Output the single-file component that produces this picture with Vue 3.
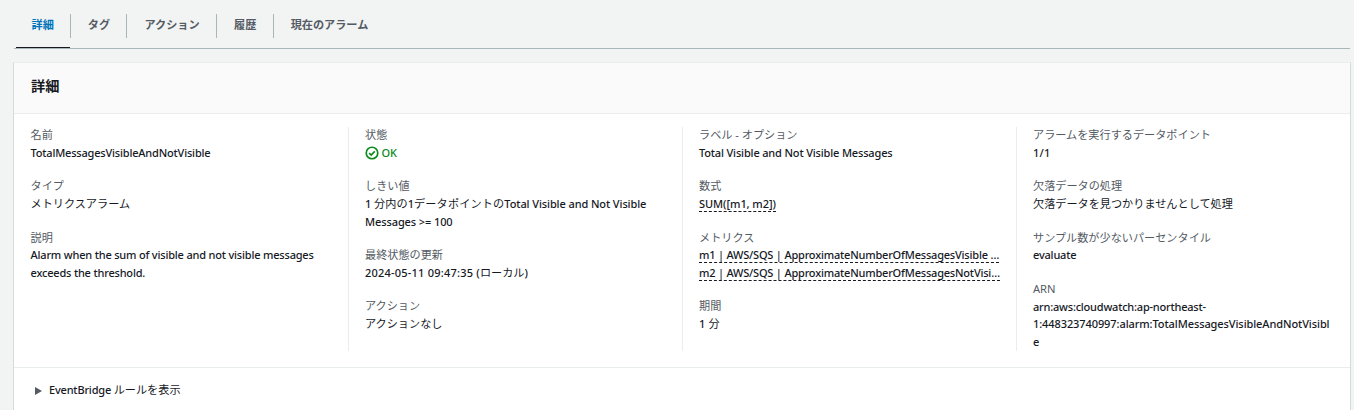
<script setup>
const tabs = ['詳細', 'タグ', 'アクション', '履歴', '現在のアラーム']

const columns = [
  [
    { label: '名前', lines: ['TotalMessagesVisibleAndNotVisible'] },
    { label: 'タイプ', lines: ['メトリクスアラーム'] },
    { label: '説明', lines: ['Alarm when the sum of visible and not visible messages', 'exceeds the threshold.'] },
  ],
  [
    { label: '状態', lines: ['OK'], kind: 'ok' },
    { label: 'しきい値', lines: ['1 分内の1データポイントのTotal Visible and Not Visible', 'Messages >= 100'], kind: 'threshold' },
    { label: '最終状態の更新', lines: ['2024-05-11 09:47:35 (ローカル)'], kind: 'numeric' },
    { label: 'アクション', lines: ['アクションなし'] },
  ],
  [
    { label: 'ラベル - オプション', lines: ['Total Visible and Not Visible Messages'], kind: 'title' },
    { label: '数式', lines: ['SUM([m1, m2])'], kind: 'hint formula' },
    {
      label: 'メトリクス',
      lines: ['m1 | AWS/SQS | ApproximateNumberOfMessagesVisible …', 'm2 | AWS/SQS | ApproximateNumberOfMessagesNotVisi…'],
      kind: 'hint',
    },
    { label: '期間', lines: ['1 分'], kind: 'numeric' },
  ],
  [
    { label: 'アラームを実行するデータポイント', lines: ['1/1'], kind: 'numeric' },
    { label: '欠落データの処理', lines: ['欠落データを見つかりませんとして処理'] },
    { label: 'サンプル数が少ないパーセンタイル', lines: ['evaluate'] },
    { label: 'ARN', lines: ['arn:aws:cloudwatch:ap-northeast-', '1:448323740997:alarm:TotalMessagesVisibleAndNotVisibl', 'e'], kind: 'arn' },
  ],
]

// Splits mixed text into Latin and Japanese runs so each gets its own weight.
const runs = (text) =>
  (text.match(/[\u3000-\u9fff]+|[^\u3000-\u9fff]+/g) || []).map((t) => ({ text: t, ja: /[\u3000-\u9fff]/.test(t) }))
</script>

<template>
  <main class="page">
    <nav class="tabs">
      <a v-for="(tab, i) in tabs" :key="tab" class="tab" :class="{ active: i === 0 }"><span>{{ tab }}</span></a>
    </nav>
    <section class="panel">
      <header class="panel-header"><h2>詳細</h2></header>
      <div class="columns">
        <div v-for="(column, i) in columns" :key="i" class="column">
          <dl v-for="field in column" :key="field.label" class="field">
            <dt>{{ field.label }}</dt>
            <dd v-for="line in field.lines" :key="line" :class="field.kind">
              <svg v-if="field.kind === 'ok'" class="check" viewBox="0 0 16 16">
                <circle cx="8" cy="8" r="6.6" />
                <path d="M4.8 8.1 7.1 10.3l4-4.1" />
              </svg>
              <span class="line"><span v-for="(run, r) in runs(line)" :key="r" :class="run.ja ? 'ja' : 'latin'">{{ run.text }}</span></span>
            </dd>
          </dl>
        </div>
      </div>
      <footer class="expander">
        <svg class="caret" viewBox="0 0 7 8"><path d="M0 0 7 4 0 8z" /></svg>
        <span class="line"><span v-for="(run, r) in runs('EventBridge ルールを表示')" :key="r" :class="run.ja ? 'ja' : 'latin'">{{ run.text }}</span></span>
      </footer>
    </section>
  </main>
</template>

<style>
body {
  background: #f2f3f3;
}
</style>

<style scoped>
.page {
  box-sizing: border-box;
  height: 410px;
  padding: 0 3px 0 13px;
  overflow: hidden;
  background: #f2f3f3;
  color: #16191f;
  font: 400 11.15px/17.6px "Noto Sans", "Noto Sans CJK JP", sans-serif;
}
.tabs {
  display: flex;
  box-sizing: border-box;
  height: 49px;
  margin: 0 1px;
  padding-left: 2px;
  border-bottom: 1px solid #aab7b8;
}
.tab {
  display: flex;
  box-sizing: border-box;
  height: 48px;
  padding-top: 14px;
  color: #545b64;
  font-weight: 700;
}
.tab span {
  height: 24px;
  padding: 0 16.4px 0 17px;
  border-right: 1px solid #aab7b8;
  line-height: 22px;
}
.tab:last-child span {
  border-right: 0;
}
.tab.active {
  background: linear-gradient(#16191f, #16191f) left bottom / calc(100% - 1px) 1px no-repeat;
  color: #0073bb;
}
.tab.active span {
  padding: 0 16px 0 15.5px;
}
.panel {
  box-sizing: border-box;
  height: 360px;
  margin-top: 13px;
  border: 1px solid #d5dbdb;
  border-top-color: #eaeded;
  border-bottom: 0;
  background: #fff;
}
.panel-header {
  box-sizing: border-box;
  height: 51px;
  padding: 11px 17px;
  border-bottom: 1px solid #eaeded;
  background: #fafafa;
}
h2 {
  margin: 0;
  font-size: 14.2px;
  line-height: 24px;
  font-weight: 700;
}
.columns {
  display: grid;
  grid-template-columns: 335px 334px 334px 333px;
  height: 224px;
  padding: 13px 0 16px;
}
.column {
  box-sizing: border-box;
  height: 224px;
  padding-left: 16px;
  border-right: 1px solid #eaeded;
}
.column:first-child {
  padding-left: 16.5px;
}
.column:last-child {
  border-right: 0;
}
.field {
  margin: 0 0 15.8px;
}
.field:first-child {
  margin-top: -1.1px;
}
dt {
  height: 18px;
  color: #545b64;
  white-space: nowrap;
}
dd {
  display: flex;
  align-items: center;
  height: 17.5px;
  margin: 0;
  white-space: nowrap;
}
.line {
  white-space: pre;
}
.latin {
  font-size: 11px;
  font-weight: 500;
  letter-spacing: -0.19px;
}
.title .latin {
  letter-spacing: -0.16px;
}
.threshold .latin {
  letter-spacing: -0.1px;
}
.threshold .ja {
  letter-spacing: 0.15px;
}
.numeric .latin {
  letter-spacing: 0.22px;
}
.arn .latin {
  letter-spacing: -0.09px;
}
.arn:nth-of-type(1) .latin {
  letter-spacing: -0.21px;
}
.ok {
  gap: 3px;
  color: #0b8a1c;
}
.ok .latin {
  letter-spacing: 0;
}
.check {
  width: 14px;
  height: 14px;
  margin-left: -0.5px;
  fill: none;
  stroke: #0b8a1c;
  stroke-width: 1.9;
}
.hint .line {
  line-height: 15px;
  border-bottom: 1px dashed #16191f;
}
.hint .latin {
  letter-spacing: -0.2px;
}
.hint.formula .latin {
  letter-spacing: -0.06px;
}
.expander {
  display: flex;
  align-items: center;
  gap: 7.5px;
  height: 44px;
  padding-left: 20.5px;
  border-top: 1px solid #eaeded;
}
.caret {
  width: 7px;
  height: 8px;
  margin-top: 1px;
  fill: #545b64;
}
</style>
